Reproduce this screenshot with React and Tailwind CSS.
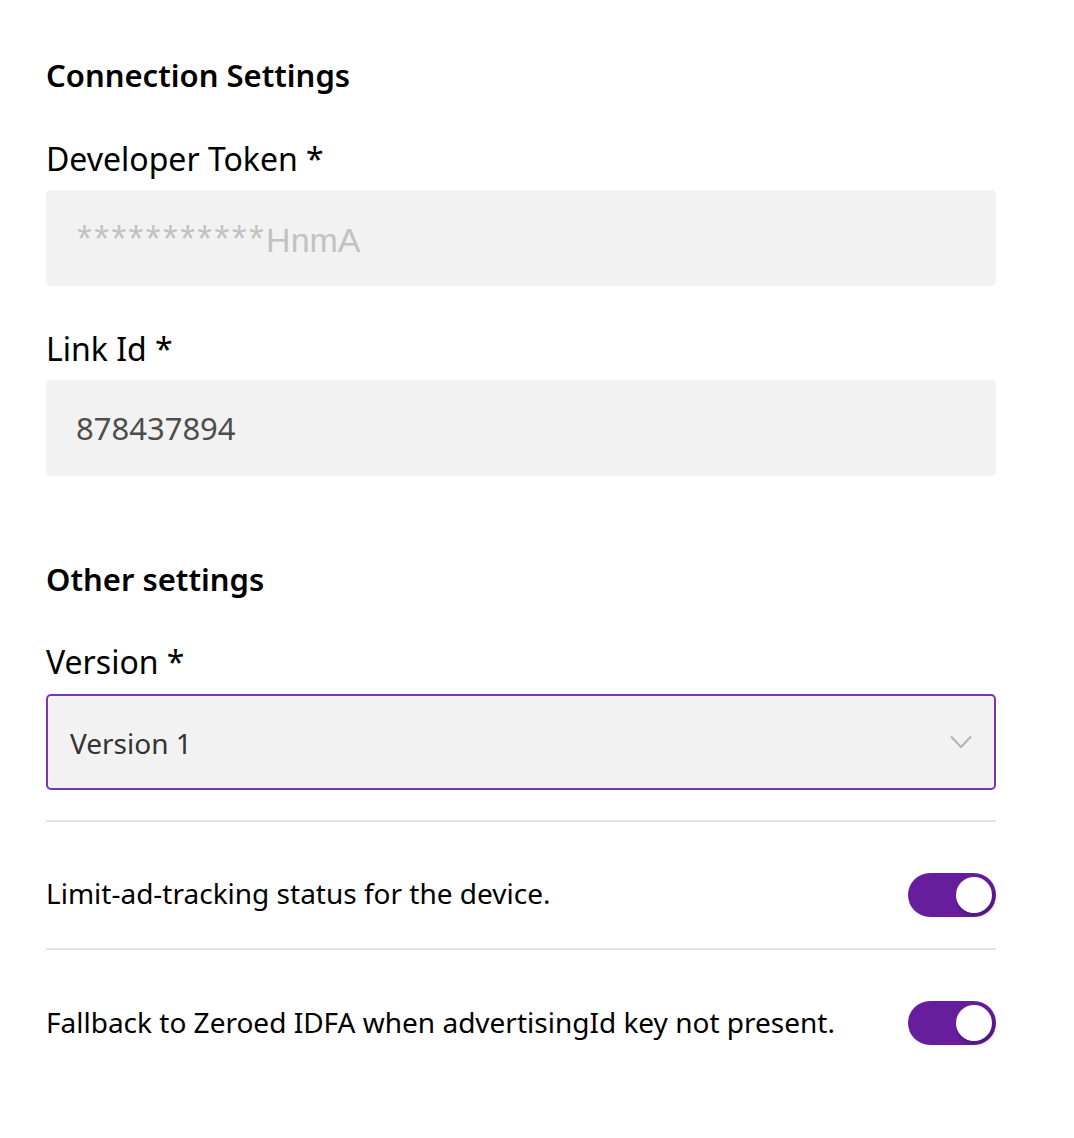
import React, { useState } from 'react';

function Toggle({ on, onClick }) {
  return (
    <button
      onClick={onClick}
      className={`relative w-[88px] h-[44px] rounded-full shrink-0 ${on ? 'bg-[#661e9c]' : 'bg-[#cccccc]'}`}
    >
      <span
        className={`absolute top-[4px] w-[36px] h-[36px] rounded-full bg-white shadow-[2px_3px_4px_rgba(0,0,0,0.25)] ${on ? 'left-[48px]' : 'left-[4px]'}`}
      />
    </button>
  );
}

export default function App() {
  const [limitAd, setLimitAd] = useState(true);
  const [fallback, setFallback] = useState(true);
  const [linkId, setLinkId] = useState('878437894');

  return (
    <div className="bg-white min-h-[1138px] px-[46px] pt-[55px] text-black font-['Noto_Sans',sans-serif]">
      <div className="w-[950px]">
        {/* Connection Settings */}
        <h2 className="text-[31px] font-semibold leading-[40px]">Connection Settings</h2>

        <label className="block mt-[44px] text-[32px] leading-[40px]">Developer Token *</label>
        <div className="mt-[11px] h-[96px] rounded-[5px] bg-[#f2f2f2] flex items-center px-[31px]">
          <span className="text-[34px] text-[#c2c2c2] font-['Liberation_Sans',Arial,sans-serif] leading-none pt-[2px]">
            <span className="text-[38px] tracking-[2.4px]">***********</span>HnmA
          </span>
        </div>

        <label className="block mt-[43px] text-[32px] leading-[40px]">Link Id *</label>
        <input
          value={linkId}
          onChange={e => setLinkId(e.target.value)}
          className="mt-[11px] w-full h-[96px] rounded-[5px] bg-[#f2f2f2] px-[30px] text-[31px] text-[#4d4d4d] outline-none"
        />

        {/* Other settings */}
        <h2 className="mt-[83px] text-[31px] font-semibold leading-[40px]">Other settings</h2>

        <label className="block mt-[43px] text-[32px] leading-[40px]">Version *</label>
        <div className="mt-[12px] h-[96px] rounded-[5px] bg-[#f2f2f2] border-2 border-[#7a35b0] flex items-center justify-between pl-[22px] pr-[22px]">
          <span className="text-[28px] text-[#333333] pt-[2px]">Version 1</span>
          <svg width="22" height="14" viewBox="0 0 22 14" fill="none">
            <path d="M1 1.5 L11 12 L21 1.5" stroke="#b3b3b3" strokeWidth="2" />
          </svg>
        </div>

        <div className="mt-[30px] h-[2px] bg-[#e2e2e2]" />
        <div className="h-[126px] pt-[20px] flex items-center justify-between">
          <span className="text-[28px] mt-[-4px]">Limit-ad-tracking status for the device.</span>
          <Toggle on={limitAd} onClick={() => setLimitAd(!limitAd)} />
        </div>
        <div className="h-[2px] bg-[#e2e2e2]" />
        <div className="h-[146px] flex items-center justify-between">
          <span className="text-[28px] mt-[-2px]">Fallback to Zeroed IDFA when advertisingId key not present.</span>
          <Toggle on={fallback} onClick={() => setFallback(!fallback)} />
        </div>
      </div>
    </div>
  );
}
